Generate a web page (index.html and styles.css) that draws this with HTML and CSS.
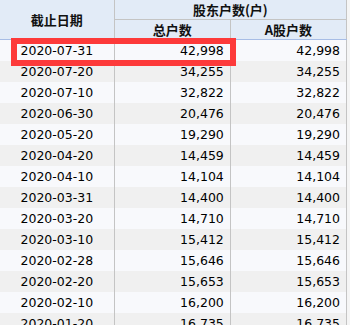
FILE: index.html
```html
<!DOCTYPE html>
<html>
<head>
<meta charset="utf-8">
<link rel="stylesheet" href="styles.css">
</head>
<body>
<div class="wrap">
<table class="grid">
  <colgroup><col class="c1"><col class="c2"><col class="c3"></colgroup>
  <thead>
    <tr class="h1"><th rowspan="2" class="hdate">截止日期</th><th colspan="2">股东户数(户)</th></tr>
    <tr class="h2"><th>总户数</th><th>A股户数</th></tr>
  </thead>
  <tbody>
    <tr><td>2020-07-31</td><td>42,998</td><td>42,998</td></tr>
    <tr><td>2020-07-20</td><td>34,255</td><td>34,255</td></tr>
    <tr><td>2020-07-10</td><td>32,822</td><td>32,822</td></tr>
    <tr><td>2020-06-30</td><td>20,476</td><td>20,476</td></tr>
    <tr><td>2020-05-20</td><td>19,290</td><td>19,290</td></tr>
    <tr><td>2020-04-20</td><td>14,459</td><td>14,459</td></tr>
    <tr><td>2020-04-10</td><td>14,104</td><td>14,104</td></tr>
    <tr><td>2020-03-31</td><td>14,400</td><td>14,400</td></tr>
    <tr><td>2020-03-20</td><td>14,710</td><td>14,710</td></tr>
    <tr><td>2020-03-10</td><td>15,412</td><td>15,412</td></tr>
    <tr><td>2020-02-28</td><td>15,646</td><td>15,646</td></tr>
    <tr><td>2020-02-20</td><td>15,653</td><td>15,653</td></tr>
    <tr><td>2020-02-10</td><td>16,200</td><td>16,200</td></tr>
    <tr><td>2020-01-20</td><td>16,735</td><td>16,735</td></tr>
  </tbody>
</table>
<div class="highlight"></div>
</div>
</body>
</html>
```
FILE: styles.css
```css
html, body {
  margin: 0;
  padding: 0;
  background: #f5f5f5;
  overflow: hidden;
}
.wrap {
  position: relative;
  width: 350px;
  height: 325px;
  overflow: hidden;
}
.grid {
  border-collapse: collapse;
  table-layout: fixed;
  width: 347px;
  font-family: "DejaVu Sans", Verdana, sans-serif;
  font-size: 12.5px;
  color: #000;
}
.c1 { width: 114px; }
.c2 { width: 116px; }
.c3 { width: 116px; }
th {
  background: #e2ebf7;
  font-family: "Noto Sans CJK SC", "DejaVu Sans", sans-serif;
  font-weight: bold;
  font-size: 13px;
  color: #111;
  padding: 0;
  border: 1px solid #c4c4c4;
  border-top: none;
  text-align: center;
  line-height: 18px;
}
th:first-child { border-left: none; }
.h1 th { height: 19px; }
.h2 th { height: 19px; border-bottom: 1px solid #a7bde6; }
.hdate { border-bottom: 1px solid #a7bde6; }
td {
  height: 21px;
  padding: 0 6px 0 0;
  text-align: right;
  border-left: 1px solid #c4c4c4;
  border-right: 1px solid #c4c4c4;
  line-height: 21px;
  white-space: nowrap;
}
td:first-child {
  text-align: center;
  padding: 0;
  border-left: none;
}
tbody tr:nth-child(odd) td { background: #f8f9fc; }
tbody tr:nth-child(even) td { background: #f0f0f0; }
.highlight {
  position: absolute;
  left: 11px;
  top: 38px;
  width: 213px;
  height: 16px;
  border: 6px solid #fd3a3a;
}
```
